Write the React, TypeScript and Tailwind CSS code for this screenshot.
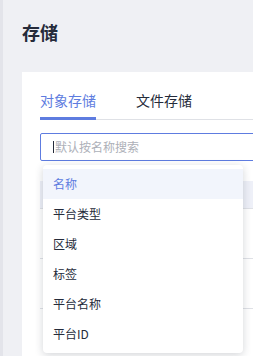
import React from "react";

const items = ["名称", "平台类型", "区域", "标签", "平台名称", "平台ID"];

export default function App() {
  return (
    <div
      className="relative flex h-[356px] w-[253px] overflow-hidden bg-[#eff0f4]"
      style={{ fontFamily: '"Noto Sans CJK SC", "Noto Sans", sans-serif' }}
    >
      <div className="h-full w-[3px] shrink-0 bg-[#e3e4ea]" />
      <div className="flex min-w-0 flex-1 flex-col">
        <div className="pl-[19px] pt-[19px] text-[18px] font-bold leading-[26px] text-[#252b3a]">
          存储
        </div>
        <div className="ml-[19px] mt-[27px] flex-1 bg-white pl-[18px]">
          <div className="mt-[18px] flex h-[30px] w-[260px] gap-[40px] border-b border-[#dfe1e6]">
            <div className="relative h-[30px] text-[14px] leading-[20px] text-[#5e7ce0]">
              对象存储
              <div className="absolute bottom-0 left-0 h-[3px] w-full bg-[#5e7ce0]" />
            </div>
            <div className="h-[30px] text-[14px] leading-[20px] text-[#252b3a]">文件存储</div>
          </div>
          <div className="mt-[13px] flex h-[28px] w-[260px] items-center rounded-[2px] border border-[#5e7ce0] pl-[12px]">
            <div className="h-[12px] w-px bg-[#252b3a]" />
            <span className="ml-px text-[12px] text-[#adb0b8]">默认按名称搜索</span>
          </div>
          <div className="mt-[20px] w-[260px]">
            <div className="h-[28px] border-b border-[#dfe1e6] bg-[#eef0f8]" />
            <div className="h-[50px] border-b border-[#dfe1e6]" />
            <div className="h-[50px] border-b border-[#dfe1e6]" />
          </div>
        </div>
      </div>
      <div className="absolute left-[43px] top-[165px] w-[200px] rounded-[4px] bg-white py-[4px] shadow-[0_2px_8px_0_rgba(37,43,58,0.2)]">
        {items.map((it, i) => (
          <div
            key={it}
            className={
              i === 0
                ? "flex h-[30px] items-center bg-[#f2f5fc] pl-[10px] text-[12px] text-[#5e7ce0]"
                : "flex h-[30px] items-center pl-[10px] text-[12px] text-[#252b3a]"
            }
          >
            {it}
          </div>
        ))}
      </div>
    </div>
  );
}
